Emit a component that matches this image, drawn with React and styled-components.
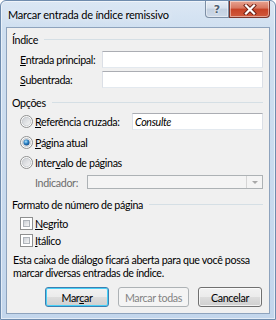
import React from "react";
import styled, { createGlobalStyle } from "styled-components";

const Global = createGlobalStyle`
  html, body { margin: 0; padding: 0; }
  body { font-family: Lato, "Liberation Sans", Arial, sans-serif; }
  #root { width: 276px; height: 320px; }
`;

const Frame = styled.div`
  width: 276px;
  height: 320px;
  box-sizing: border-box;
  display: flex;
  flex-direction: column;
  border: 1px solid #6f8cae;
  border-radius: 6px 6px 0 0;
  background: linear-gradient(to bottom, #dbe7f4 0px, #cfdff0 30px, #c3d6ec 100%);
  padding: 0 5px 5px 5px;
  box-shadow: inset 0 0 0 1px rgba(255, 255, 255, 0.55);
`;

const TitleBar = styled.div`
  height: 26px;
  display: flex;
  align-items: flex-start;
`;

const Title = styled.div`
  flex: 1;
  padding: 7px 0 0 2px;
  font-size: 11px;
  letter-spacing: -0.2px;
  color: #000;
  white-space: nowrap;
  text-shadow: 0 0 6px rgba(255, 255, 255, 0.9);
`;

const CaptionButton = styled.div`
  height: 17px;
  box-sizing: border-box;
  display: flex;
  align-items: center;
  justify-content: center;
  border: 1px solid ${(p) => (p.$close ? "#7a352c" : "#7d8fa5")};
  border-top: none;
  border-radius: ${(p) => (p.$close ? "0 0 4px 0" : "0 0 0 4px")};
  width: ${(p) => (p.$close ? "41px" : "24px")};
  background: ${(p) =>
    p.$close
      ? "linear-gradient(to bottom, #e8a492 0%, #d7765f 45%, #c74226 50%, #d05a3d 100%)"
      : "linear-gradient(to bottom, #e9eef5 0%, #d6e0ec 45%, #c3d0e0 50%, #cdd9e8 100%)"};
  box-shadow: inset 0 0 0 1px rgba(255, 255, 255, 0.45);
`;

const HelpGlyph = styled.span`
  font-family: "DejaVu Sans", sans-serif;
  font-weight: bold;
  font-size: 11px;
  color: #4e5e70;
  text-shadow: 0 0 2px #fff, 0 0 2px #fff;
  line-height: 1;
`;

const Client = styled.div`
  flex: 1;
  display: flex;
  flex-direction: column;
  background: #f0f0f0;
  border: 1px solid #8ea3bd;
  padding: 0 6px 0 5px;
  font-size: 10.7px;
  letter-spacing: -0.35px;
  color: #000;
  white-space: nowrap;
`;

const Header = styled.div`
  display: flex;
  align-items: center;
  height: 14px;
  margin-top: ${(p) => p.$mt}px;
  &::after {
    content: "";
    flex: 1;
    height: 1px;
    background: #d5dfe5;
    margin-left: 6px;
  }
`;

const Row = styled.div`
  display: flex;
  align-items: center;
  height: ${(p) => p.$h || 14}px;
  margin-top: ${(p) => p.$mt}px;
  padding-left: ${(p) => p.$pl || 8}px;
`;

const Label = styled.span`
  display: flex;
  align-items: center;
  width: ${(p) => (p.$w ? `${p.$w}px` : "auto")};
  flex-shrink: 0;
  color: ${(p) => (p.$dim ? "#6d6d6d" : "#000")};
`;

const TextBox = styled.div`
  flex: 1;
  align-self: stretch;
  box-sizing: border-box;
  background: #fff;
  border: 1px solid #abadb3;
  border-left-color: #dbdfe6;
  border-right-color: #dbdfe6;
  border-bottom-color: #e3e9ef;
  display: flex;
  align-items: center;
  padding-left: 2px;
  font-style: italic;
`;

const Select = styled.div`
  flex: 1;
  align-self: stretch;
  box-sizing: border-box;
  background: #f4f4f4;
  border: 1px solid #adb2b5;
  display: flex;
  justify-content: flex-end;
`;

const SelectArrow = styled.div`
  width: 15px;
  border-left: 1px solid #d5d5d5;
  display: flex;
  align-items: center;
  justify-content: center;
  &::before {
    content: "";
    border-left: 3px solid transparent;
    border-right: 3px solid transparent;
    border-top: 3px solid #a8a8a8;
  }
`;

const Box = styled.span`
  width: 13px;
  height: 13px;
  box-sizing: border-box;
  border: 1px solid #8e8f8f;
  background: #fff;
  margin-right: 2px;
  padding: 2px;
  display: flex;
  flex-shrink: 0;
  &::before {
    content: "";
    flex: 1;
    background: linear-gradient(135deg, #cbcfd5, #f6f6f6);
    border: 1px solid #aeb3b9;
  }
`;

const Paragraph = styled.div`
  margin-top: 6px;
  line-height: 13px;
  padding-left: 1px;
`;

const ButtonRow = styled.div`
  display: flex;
  justify-content: flex-end;
  gap: 9px;
  margin-top: 8px;
  padding-right: 1px;
`;

const Button = styled.div`
  width: ${(p) => p.$w}px;
  height: 20px;
  box-sizing: border-box;
  border-radius: 3px;
  display: flex;
  align-items: center;
  justify-content: center;
  border: 1px solid ${(p) => (p.$default ? "#3c7fb1" : p.$disabled ? "#adb2b5" : "#707070")};
  color: ${(p) => (p.$disabled ? "#838383" : "#000")};
  background: ${(p) =>
    p.$disabled
      ? "#f4f4f4"
      : "linear-gradient(to bottom, #f2f2f2 0%, #ebebeb 50%, #dddddd 51%, #cfcfcf 100%)"};
  box-shadow: ${(p) =>
    p.$default ? "inset 0 0 0 1px #48d0f7" : p.$disabled ? "none" : "inset 0 0 0 1px rgba(255,255,255,0.7)"};
`;

const Radio = ({ checked }) => (
  <svg width="13" height="13" viewBox="0 0 13 13" style={{ marginRight: 2, flexShrink: 0 }}>
    <defs>
      <linearGradient id="rbg" x1="0" y1="0" x2="1" y2="1">
        <stop offset="0" stopColor="#c9ccd1" />
        <stop offset="1" stopColor="#f7f7f7" />
      </linearGradient>
      <radialGradient id="rdot" cx="0.4" cy="0.35" r="0.7">
        <stop offset="0" stopColor="#b6e4fb" />
        <stop offset="0.5" stopColor="#2b83c6" />
        <stop offset="1" stopColor="#16467e" />
      </radialGradient>
    </defs>
    <circle cx="6.5" cy="6.5" r="6" fill="#fff" stroke="#8e8f8f" />
    <circle cx="6.5" cy="6.5" r="4.3" fill="url(#rbg)" stroke="#b4b8bd" strokeWidth="0.6" />
    {checked && <circle cx="6.5" cy="6.5" r="3" fill="url(#rdot)" />}
  </svg>
);

const CloseGlyph = () => (
  <svg width="14" height="11" viewBox="0 0 14 11">
    <path d="M3 1.5 L11 9.5 M11 1.5 L3 9.5" stroke="#6b1d12" strokeWidth="4" strokeLinecap="square" />
    <path d="M3 1.5 L11 9.5 M11 1.5 L3 9.5" stroke="#fff" strokeWidth="2.2" strokeLinecap="square" />
  </svg>
);

export default function App() {
  return (
    <>
      <Global />
      <Frame>
        <TitleBar>
          <Title>Marcar entrada de índice remissivo</Title>
          <CaptionButton>
            <HelpGlyph>?</HelpGlyph>
          </CaptionButton>
          <CaptionButton $close>
            <CloseGlyph />
          </CaptionButton>
        </TitleBar>
        <Client>
          <Header $mt={4}>Índice</Header>
          <Row $mt={5} $h={17}>
            <Label $w={82}>
              <u>E</u>ntrada principal:
            </Label>
            <TextBox />
          </Row>
          <Row $mt={3} $h={17}>
            <Label $w={82}>
              <u>S</u>ubentrada:
            </Label>
            <TextBox />
          </Row>
          <Header $mt={7}>Opções</Header>
          <Row $mt={4} $h={17}>
            <Label $w={112}>
              <Radio />
              <span>
                <u>R</u>eferência cruzada:
              </span>
            </Label>
            <TextBox>Consulte</TextBox>
          </Row>
          <Row $mt={5}>
            <Radio checked />
            <span>
              <u>P</u>ágina atual
            </span>
          </Row>
          <Row $mt={6}>
            <Radio />
            <span>
              Inter<u>v</u>alo de páginas
            </span>
          </Row>
          <Row $mt={6} $pl={23}>
            <Label $w={52} $dim>
              Indicador:
            </Label>
            <Select>
              <SelectArrow />
            </Select>
          </Row>
          <Header $mt={8}>Formato de número de página</Header>
          <Row $mt={5}>
            <Box />
            <span>
              <u>N</u>egrito
            </span>
          </Row>
          <Row $mt={3}>
            <Box />
            <span>
              <u>I</u>tálico
            </span>
          </Row>
          <Paragraph>
            Esta caixa de diálogo ficará aberta para que você possa
            <br />
            marcar diversas entradas de índice.
          </Paragraph>
          <ButtonRow>
            <Button $w={64} $default>
              <span>
                Mar<u>c</u>ar
              </span>
            </Button>
            <Button $w={71} $disabled>
              Marcar todas
            </Button>
            <Button $w={64}>Cancelar</Button>
          </ButtonRow>
        </Client>
      </Frame>
    </>
  );
}
